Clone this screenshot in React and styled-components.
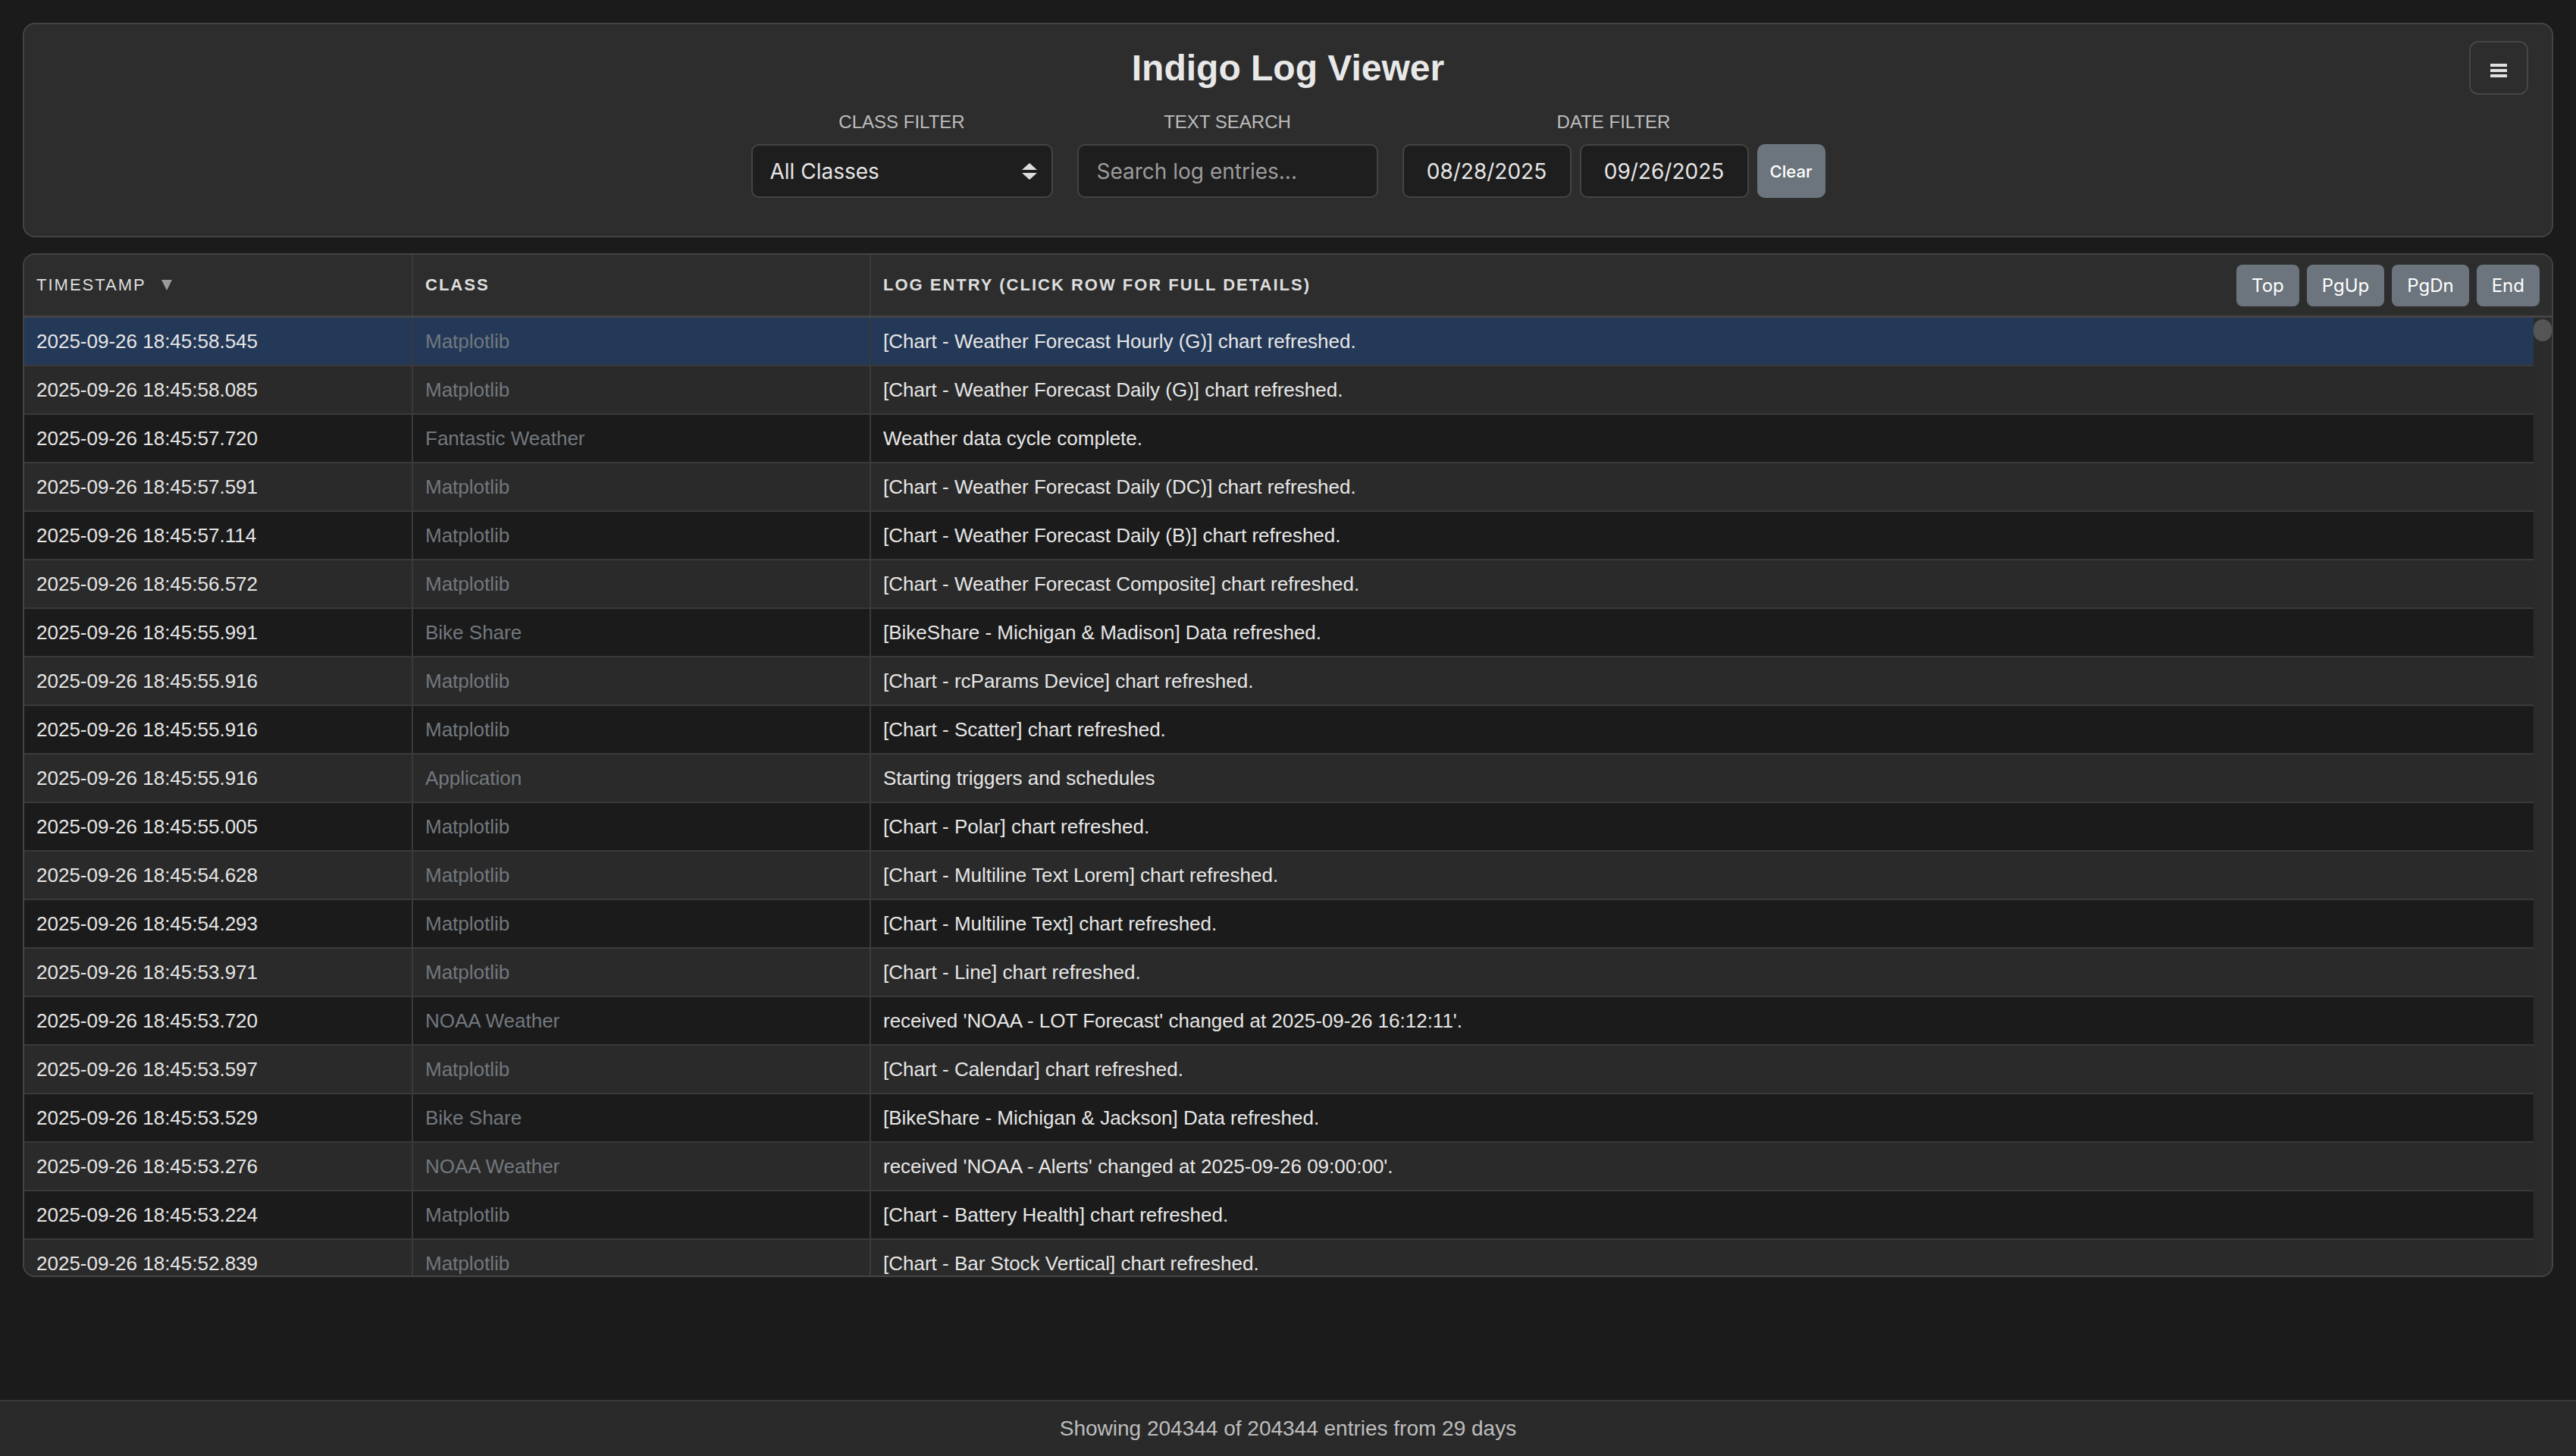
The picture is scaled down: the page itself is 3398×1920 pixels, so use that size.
import React from 'react';
import styled, { createGlobalStyle, css } from 'styled-components';

const GlobalStyle = createGlobalStyle`
  * { box-sizing: border-box; }
  html, body {
    margin: 0;
    padding: 0;
    height: 100%;
    overflow: hidden;
    background: #1b1b1b;
  }
  body {
    font-family: "Liberation Sans", Arial, Helvetica, sans-serif;
    color: #e6e6e6;
  }
`;

const Page = styled.div`
  padding: 30px 30px 0;
`;

const HeaderPanel = styled.header`
  position: relative;
  background: #2d2d2d;
  border: 2px solid #444;
  border-radius: 16px;
  padding: 30px 30px 50px;
`;

const Title = styled.h1`
  margin: 0 0 29px;
  text-align: center;
  font-size: 48px;
  line-height: 56px;
  font-weight: 700;
  color: #e8e8e8;
`;

const MenuButton = styled.button`
  position: absolute;
  top: 22px;
  right: 31px;
  width: 78px;
  height: 71px;
  background: transparent;
  border: 2px solid #464646;
  border-radius: 12px;
  display: flex;
  align-items: center;
  justify-content: center;
  padding: 6px 0 0;
  color: #e0e0e0;
  cursor: pointer;
`;

const Controls = styled.div`
  display: flex;
  justify-content: center;
  align-items: flex-start;
  gap: 32px;
`;

const FilterGroup = styled.div`
  display: flex;
  flex-direction: column;
  align-items: center;
`;

const FilterLabel = styled.label`
  font-size: 24px;
  line-height: 28px;
  color: #bdbdbd;
  text-transform: uppercase;
  margin-bottom: 15px;
`;

const fieldBase = css`
  height: 71px;
  background: #1e1e1e;
  border: 2px solid #444;
  border-radius: 10px;
  color: #e6e6e6;
  font-family: Inter, "Liberation Sans", sans-serif;
  font-size: 28px;
  outline: none;
`;

const SelectWrap = styled.div`
  position: relative;
  width: 398px;
`;

const Select = styled.select`
  ${fieldBase};
  width: 100%;
  appearance: none;
  -webkit-appearance: none;
  padding: 0 60px 0 23px;
`;

const SelectArrows = styled.svg`
  position: absolute;
  right: 21px;
  top: 50%;
  transform: translateY(-50%);
  pointer-events: none;
`;

const SearchInput = styled.input`
  ${fieldBase};
  width: 397px;
  padding: 0 24px;
  &::placeholder {
    color: #9c9c9c;
  }
`;

const DateRow = styled.div`
  display: flex;
  gap: 11px;
`;

const DateInput = styled.input`
  ${fieldBase};
  width: 223px;
  padding: 0 10px;
  text-align: center;
`;

const ClearButton = styled.button`
  height: 71px;
  width: 90px;
  background: #6c757d;
  border: none;
  border-radius: 10px;
  color: #fff;
  font-family: Inter, "Liberation Sans", sans-serif;
  font-size: 22px;
  font-weight: 500;
  padding: 0;
  cursor: pointer;
`;

const TablePanel = styled.section`
  margin-top: 21px;
  height: 1350px;
  display: flex;
  flex-direction: column;
  background: #2d2d2d;
  border: 2px solid #444;
  border-radius: 16px;
  overflow: hidden;
`;

const gridCols = '513px 604px 1fr';

const HeaderRow = styled.div`
  display: grid;
  grid-template-columns: ${gridCols};
  height: 83px;
  flex-shrink: 0;
  background: #2d2d2d;
  border-bottom: 3px solid #444;
`;

const HeaderCell = styled.div`
  display: flex;
  align-items: center;
  padding: 0 16px;
  border-right: ${(p) => (p.$last ? 'none' : '2px solid #3a3a3a')};
  font-size: 22px;
  letter-spacing: 2px;
  text-transform: uppercase;
  font-weight: ${(p) => (p.$sortable ? 400 : 700)};
  color: #dedede;
  white-space: nowrap;
`;

const SortArrow = styled.svg`
  margin-left: 20px;
`;

const NavGroup = styled.div`
  margin-left: auto;
  display: flex;
  gap: 10px;
  letter-spacing: 0;
`;

const NavButton = styled.button`
  height: 55px;
  padding: 0 20px;
  background: #6c757d;
  color: #fff;
  border: none;
  border-radius: 8px;
  font-family: Inter, "Liberation Sans", sans-serif;
  font-size: 24px;
  letter-spacing: 0;
  cursor: pointer;
`;

const Body = styled.div`
  flex: 1;
  min-height: 0;
  display: flex;
`;

const RowList = styled.div`
  flex: 1;
  min-width: 0;
  overflow: hidden;
`;

const ScrollTrack = styled.div`
  width: 24px;
  flex-shrink: 0;
  background: #2b2b2b;
  padding-top: 2px;
`;

const ScrollThumb = styled.div`
  height: 29px;
  border-radius: 12px;
  background: #555;
`;

const Row = styled.div`
  display: grid;
  grid-template-columns: ${gridCols};
  height: 64px;
  border-bottom: 2px solid #3a3a3a;
  background: ${(p) => (p.$selected ? '#243858' : p.$even ? '#2a2a2a' : '#1b1b1b')};
  cursor: pointer;
`;

const Cell = styled.div`
  display: flex;
  align-items: center;
  padding: 0 16px;
  font-size: 26px;
  white-space: nowrap;
  overflow: hidden;
  border-right: ${(p) => (p.$last ? 'none' : '2px solid #3a3a3a')};
  color: ${(p) => (p.$muted ? '#72787e' : '#e6e6e6')};
`;

const Footer = styled.footer`
  position: fixed;
  left: 0;
  right: 0;
  bottom: 0;
  height: 74px;
  background: #2a2a2a;
  border-top: 2px solid #3a3a3a;
  display: flex;
  align-items: center;
  justify-content: center;
  font-size: 28px;
  color: #bdbdbd;
`;

const rows = [
  ['2025-09-26 18:45:58.545', 'Matplotlib', '[Chart - Weather Forecast Hourly (G)] chart refreshed.'],
  ['2025-09-26 18:45:58.085', 'Matplotlib', '[Chart - Weather Forecast Daily (G)] chart refreshed.'],
  ['2025-09-26 18:45:57.720', 'Fantastic Weather', 'Weather data cycle complete.'],
  ['2025-09-26 18:45:57.591', 'Matplotlib', '[Chart - Weather Forecast Daily (DC)] chart refreshed.'],
  ['2025-09-26 18:45:57.114', 'Matplotlib', '[Chart - Weather Forecast Daily (B)] chart refreshed.'],
  ['2025-09-26 18:45:56.572', 'Matplotlib', '[Chart - Weather Forecast Composite] chart refreshed.'],
  ['2025-09-26 18:45:55.991', 'Bike Share', '[BikeShare - Michigan & Madison] Data refreshed.'],
  ['2025-09-26 18:45:55.916', 'Matplotlib', '[Chart - rcParams Device] chart refreshed.'],
  ['2025-09-26 18:45:55.916', 'Matplotlib', '[Chart - Scatter] chart refreshed.'],
  ['2025-09-26 18:45:55.916', 'Application', 'Starting triggers and schedules'],
  ['2025-09-26 18:45:55.005', 'Matplotlib', '[Chart - Polar] chart refreshed.'],
  ['2025-09-26 18:45:54.628', 'Matplotlib', '[Chart - Multiline Text Lorem] chart refreshed.'],
  ['2025-09-26 18:45:54.293', 'Matplotlib', '[Chart - Multiline Text] chart refreshed.'],
  ['2025-09-26 18:45:53.971', 'Matplotlib', '[Chart - Line] chart refreshed.'],
  ['2025-09-26 18:45:53.720', 'NOAA Weather', "received 'NOAA - LOT Forecast' changed at 2025-09-26 16:12:11'."],
  ['2025-09-26 18:45:53.597', 'Matplotlib', '[Chart - Calendar] chart refreshed.'],
  ['2025-09-26 18:45:53.529', 'Bike Share', '[BikeShare - Michigan & Jackson] Data refreshed.'],
  ['2025-09-26 18:45:53.276', 'NOAA Weather', "received 'NOAA - Alerts' changed at 2025-09-26 09:00:00'."],
  ['2025-09-26 18:45:53.224', 'Matplotlib', '[Chart - Battery Health] chart refreshed.'],
  ['2025-09-26 18:45:52.839', 'Matplotlib', '[Chart - Bar Stock Vertical] chart refreshed.'],
];

export default function App() {
  return (
    <>
      <GlobalStyle />
      <Page>
        <HeaderPanel>
          <Title>Indigo Log Viewer</Title>
          <MenuButton aria-label="Menu">
            <svg width="22" height="18" viewBox="0 0 22 18">
              <rect x="0" y="0" width="22" height="4" fill="currentColor" />
              <rect x="0" y="7" width="22" height="4" fill="currentColor" />
              <rect x="0" y="14" width="22" height="4" fill="currentColor" />
            </svg>
          </MenuButton>
          <Controls>
            <FilterGroup>
              <FilterLabel>Class Filter</FilterLabel>
              <SelectWrap>
                <Select defaultValue="all">
                  <option value="all">All Classes</option>
                </Select>
                <SelectArrows width="20" height="22" viewBox="0 0 20 22">
                  <polygon points="0,9 10,0 20,9" fill="#dcdcdc" />
                  <polygon points="0,13 20,13 10,22" fill="#dcdcdc" />
                </SelectArrows>
              </SelectWrap>
            </FilterGroup>
            <FilterGroup>
              <FilterLabel>Text Search</FilterLabel>
              <SearchInput type="text" placeholder="Search log entries..." />
            </FilterGroup>
            <FilterGroup>
              <FilterLabel>Date Filter</FilterLabel>
              <DateRow>
                <DateInput type="text" defaultValue="08/28/2025" />
                <DateInput type="text" defaultValue="09/26/2025" />
                <ClearButton>Clear</ClearButton>
              </DateRow>
            </FilterGroup>
          </Controls>
        </HeaderPanel>

        <TablePanel>
          <HeaderRow>
            <HeaderCell $sortable>
              Timestamp
              <SortArrow width="14" height="14" viewBox="0 0 14 14">
                <polygon points="0,0 14,0 7,14" fill="#9a9a9a" />
              </SortArrow>
            </HeaderCell>
            <HeaderCell>Class</HeaderCell>
            <HeaderCell $last>
              Log Entry (Click row for full details)
              <NavGroup>
                <NavButton>Top</NavButton>
                <NavButton>PgUp</NavButton>
                <NavButton>PgDn</NavButton>
                <NavButton>End</NavButton>
              </NavGroup>
            </HeaderCell>
          </HeaderRow>
          <Body>
            <RowList>
              {rows.map(([ts, cls, msg], i) => (
                <Row key={i} $selected={i === 0} $even={i % 2 === 1}>
                  <Cell>{ts}</Cell>
                  <Cell $muted>{cls}</Cell>
                  <Cell $last>{msg}</Cell>
                </Row>
              ))}
            </RowList>
            <ScrollTrack>
              <ScrollThumb />
            </ScrollTrack>
          </Body>
        </TablePanel>
      </Page>
      <Footer>Showing 204344 of 204344 entries from 29 days</Footer>
    </>
  );
}
